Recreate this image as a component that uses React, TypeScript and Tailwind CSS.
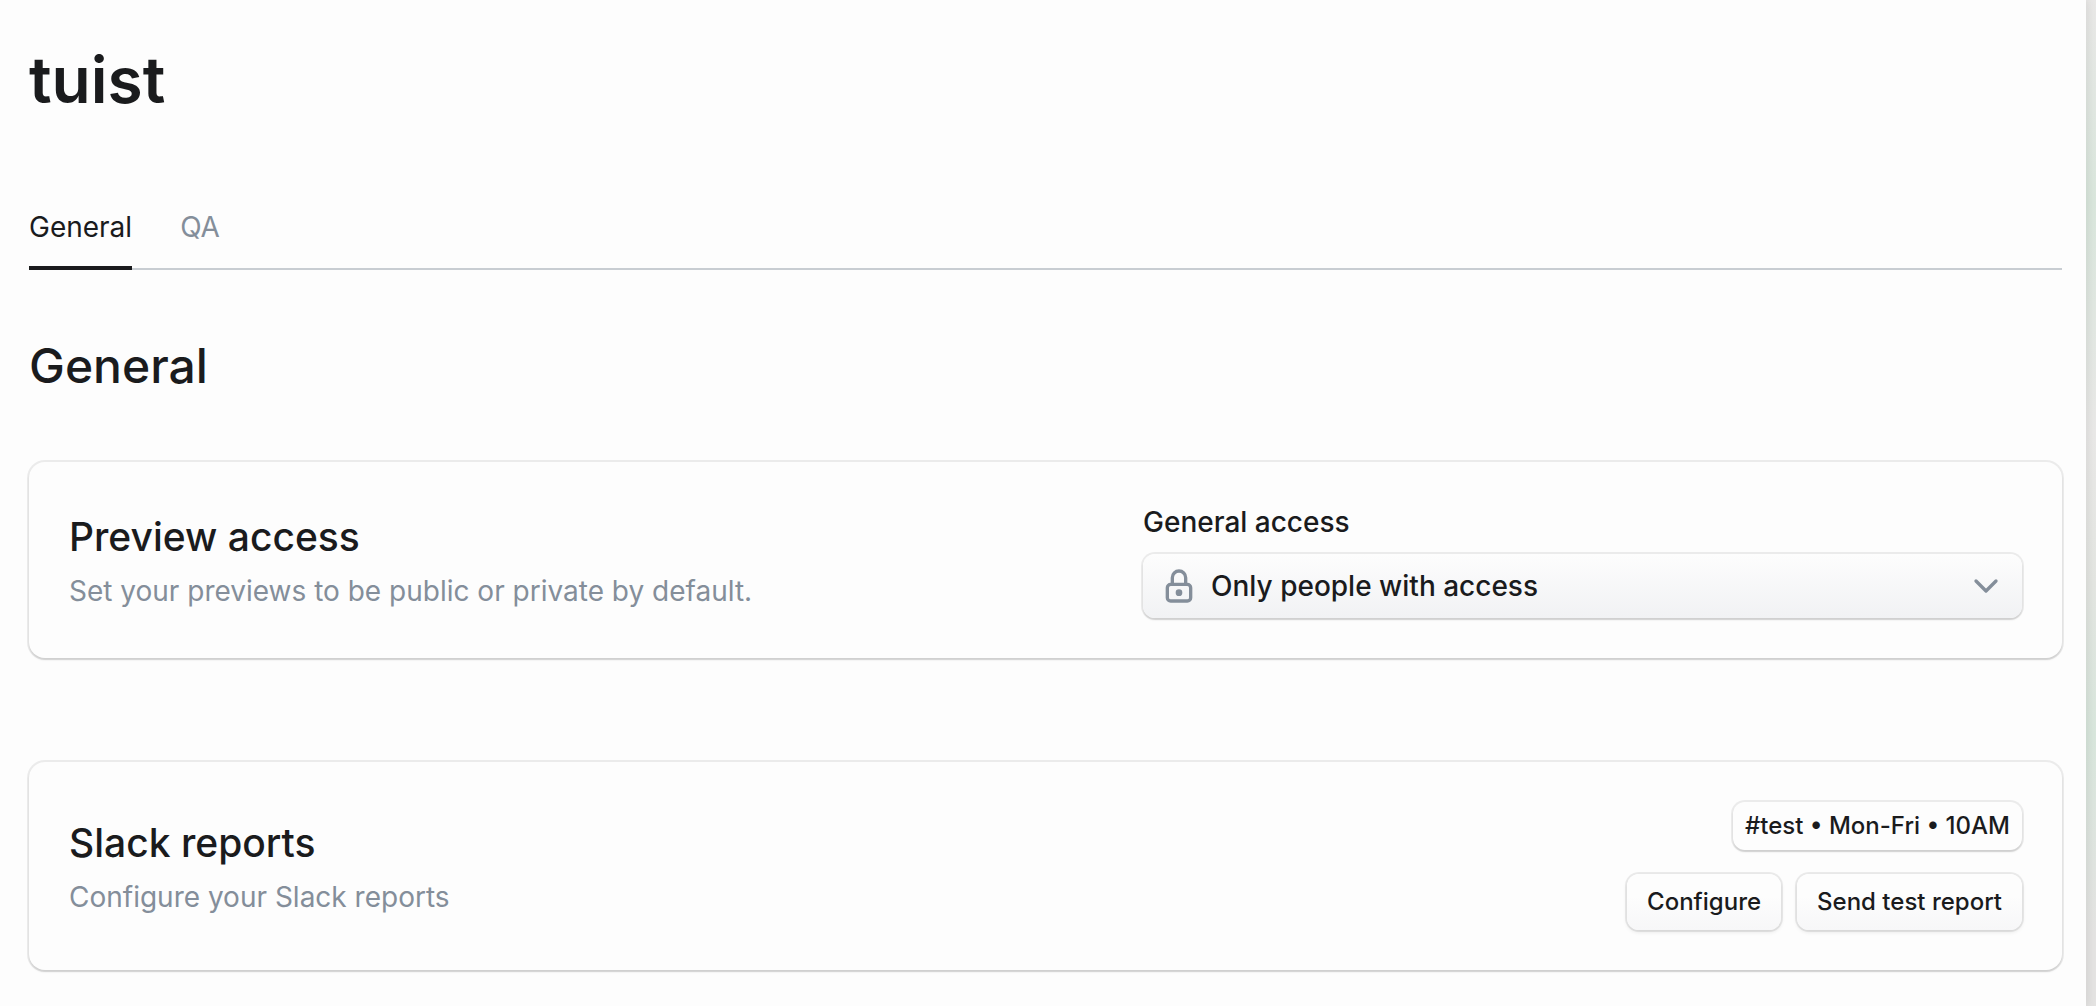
import React, { useState } from 'react';

const surface = 'shadow-[0_0_0_2px_rgba(0,0,0,0.07),0_2px_2px_rgba(0,0,0,0.12)]';

const LockIcon: React.FC<{ className?: string }> = ({ className }) => (
  <svg className={className} viewBox="0 0 24 24" fill="none" stroke="currentColor" strokeWidth="2" strokeLinecap="round" strokeLinejoin="round" aria-hidden="true">
    <path d="M5 13a2 2 0 0 1 2 -2h10a2 2 0 0 1 2 2v6a2 2 0 0 1 -2 2h-10a2 2 0 0 1 -2 -2v-6z" />
    <path d="M11 16a1 1 0 1 0 2 0a1 1 0 0 0 -2 0" />
    <path d="M8 11v-4a4 4 0 1 1 8 0v4" />
  </svg>
);

const ChevronDownIcon: React.FC<{ className?: string }> = ({ className }) => (
  <svg className={className} viewBox="0 0 24 24" fill="none" stroke="currentColor" strokeWidth="2" strokeLinecap="round" strokeLinejoin="round" aria-hidden="true">
    <path d="M6 9l6 6l6 -6" />
  </svg>
);

interface SettingsCardProps {
  title: string;
  description: string;
  children: React.ReactNode;
}

const SettingsCard: React.FC<SettingsCardProps> = ({ title, description, children }) => (
  <section className={`flex items-center justify-between gap-10 rounded-2xl bg-[#fdfdfd] p-10 ${surface}`}>
    <div className="flex flex-col gap-1.5">
      <h3 className="text-[39px] leading-14 font-medium">{title}</h3>
      <p className="text-[28px] leading-10 text-[#848e9a]">{description}</p>
    </div>
    {children}
  </section>
);

const SettingsButton: React.FC<{ children: React.ReactNode }> = ({ children }) => (
  <button
    type="button"
    className="h-14 rounded-xl bg-linear-to-b from-[#fdfdfd] from-40% to-[#f7f7f8] px-5 text-2xl font-medium shadow-[0_0_0_2px_rgba(0,0,0,0.07),0_2px_4px_rgba(0,0,0,0.1)]"
  >
    {children}
  </button>
);

const tabs = ['General', 'QA'];

const App: React.FC = () => {
  const [activeTab, setActiveTab] = useState('General');
  const [access, setAccess] = useState('private');

  return (
    <div className="min-h-screen bg-[linear-gradient(to_bottom,#e9e8e7,#d9e6dc_20%,#e9e8e7_43%,#e3e5e1_58%,#d8e6dc_73%,#e4e3e2_93%)] pr-[10px] font-['Inter',sans-serif] text-[#1a1b1d]">
      <main className="min-h-screen bg-[#fdfdfd] pt-10 pr-6 pb-9 pl-[29px] shadow-[2px_0_8px_rgba(0,0,0,0.08)]">
        <h1 className="text-[64px] leading-20 font-semibold">tuist</h1>

        <div role="tablist" className="mt-[66px] flex gap-12 border-b-2 border-[#c8cdd2]">
          {tabs.map((tab) => (
            <button
              key={tab}
              type="button"
              role="tab"
              aria-selected={tab === activeTab}
              onClick={() => setActiveTab(tab)}
              className={`-mb-[2px] border-b-4 pt-[21px] pb-[19px] text-[28px] leading-10 ${
                tab === activeTab ? 'border-[#1a1b1d]' : 'border-transparent text-[#848e9a]'
              }`}
            >
              {tab}
            </button>
          ))}
        </div>

        <h2 className="my-[66px] text-5xl leading-[60px] font-medium">General</h2>

        <div className="flex flex-col gap-[104px]">
          <SettingsCard title="Preview access" description="Set your previews to be public or private by default.">
            <div className="flex w-[879px] flex-col gap-3">
              <label htmlFor="general-access" className="text-[28px] leading-10 font-medium">
                General access
              </label>
              <div className="relative text-[#848e9a]">
                <select
                  id="general-access"
                  value={access}
                  onChange={(event) => setAccess(event.target.value)}
                  className={`h-16 w-full appearance-none rounded-xl bg-linear-to-b from-[#fdfdfd] to-[#f1f2f4] pr-16 pl-17 text-[28px] font-medium text-[#1a1b1d] ${surface}`}
                >
                  <option value="private">Only people with access</option>
                  <option value="public">Anyone with the link</option>
                </select>
                <LockIcon className="pointer-events-none absolute top-3 left-4 size-10" />
                <ChevronDownIcon className="pointer-events-none absolute top-3 right-4 size-10" />
              </div>
            </div>
          </SettingsCard>

          <SettingsCard title="Slack reports" description="Configure your Slack reports">
            <div className="flex flex-col items-end gap-6">
              <span className={`flex h-12 items-center rounded-xl px-3 text-2xl font-medium ${surface}`}>
                #test • Mon-Fri • 10AM
              </span>
              <div className="flex gap-4">
                <SettingsButton>Configure</SettingsButton>
                <SettingsButton>Send test report</SettingsButton>
              </div>
            </div>
          </SettingsCard>
        </div>
      </main>
    </div>
  );
};

export default App;
